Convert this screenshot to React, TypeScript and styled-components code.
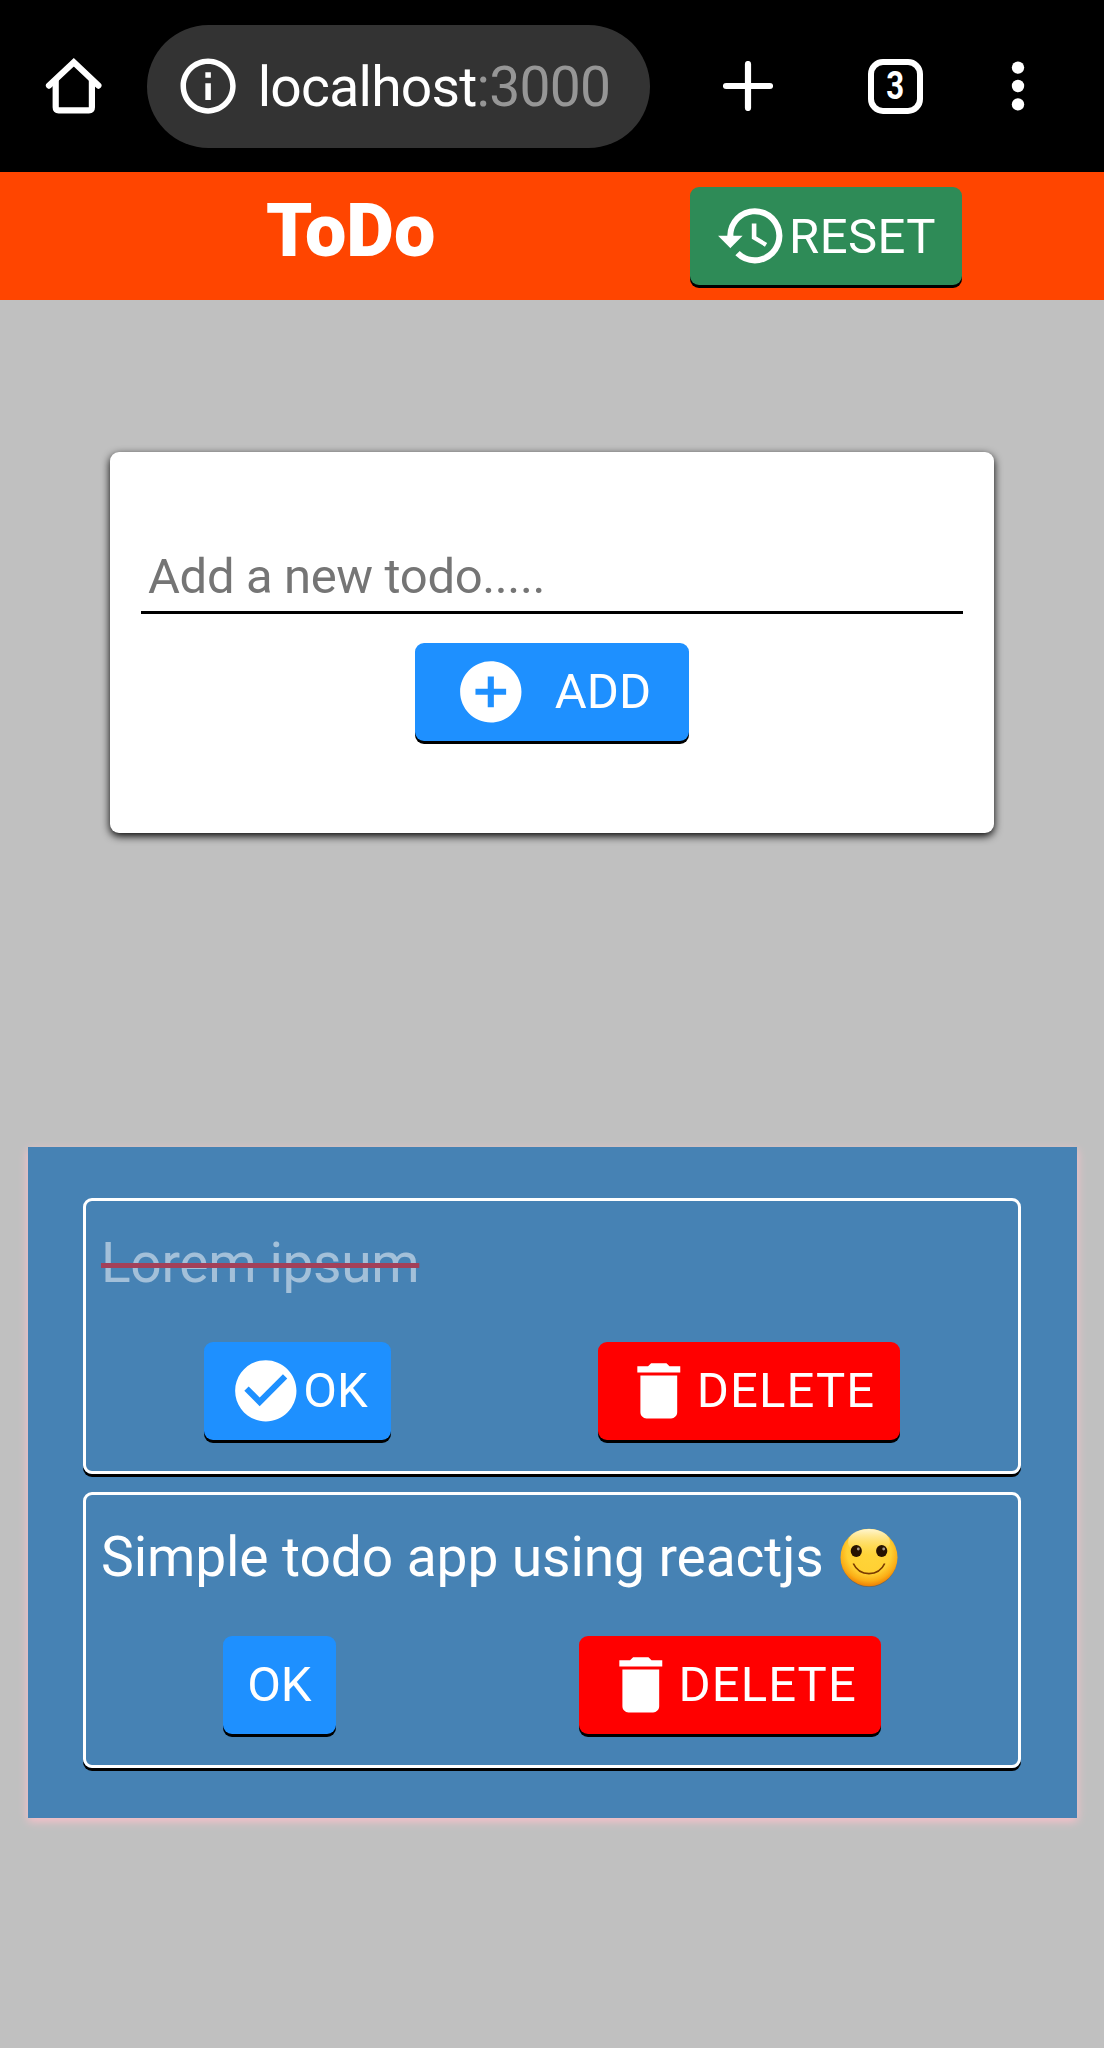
import React from "react";
import styled, { createGlobalStyle } from "styled-components";
import { MdAddCircle, MdCheckCircle, MdDelete, MdHistory, MdInfoOutline } from "react-icons/md";

const GlobalStyle = createGlobalStyle`
  * { box-sizing: border-box; }
  body {
    margin: 0;
    background: silver;
    font-family: Roboto, "Liberation Sans", sans-serif;
  }
`;

const Page = styled.div`
  min-height: 2048px;
  display: flex;
  flex-direction: column;
  background: silver;
  overflow: hidden;
`;

const BrowserBar = styled.header`
  flex: none;
  display: flex;
  align-items: center;
  height: 172px;
  padding: 0 76px 0 37px;
  background: #000;
  color: #fff;
`;

const AddressPill = styled.div`
  display: flex;
  align-items: center;
  width: 503px;
  height: 123px;
  margin-left: 36px;
  padding-left: 28px;
  border-radius: 62px;
  background: #333;
`;

const Address = styled.span`
  margin-left: 16.5px;
  padding-top: 2px;
  font-size: 55.2px;
  line-height: 64px;
  letter-spacing: -0.75px;
  white-space: nowrap;
`;

const Port = styled.span`
  color: #969696;
`;

const BarActions = styled.div`
  flex: 1;
  display: flex;
  align-items: center;
  justify-content: space-between;
  padding-left: 73px;
`;

const TabCount = styled.div`
  display: flex;
  align-items: center;
  justify-content: center;
  width: 55px;
  height: 55px;
  margin-left: 9px;
  border: 6px solid #fff;
  border-radius: 15px;
  font-size: 39px;
  font-weight: 700;
  line-height: 43px;
`;

const TabDigit = styled.span`
  padding-top: 1px;
  transform: scaleX(0.8);
`;

const AppHeader = styled.div`
  flex: none;
  display: flex;
  height: 128px;
  background: orangered;
  padding: 15px 142.5px 0 266px;
  justify-content: space-between;
  align-items: flex-start;
`;

const Title = styled.h1`
  margin: 0;
  padding-top: 0.5px;
  font-size: 73.6px;
  line-height: 86px;
  font-weight: 900;
  color: #fff;
`;

const Button = styled.button<{ $bg: string; $width: number; $spacing?: number; $gap?: number }>`
  display: flex;
  flex: none;
  align-items: center;
  gap: ${(p) => p.$gap ?? 1}px;
  width: ${(p) => p.$width}px;
  height: 98px;
  padding: 0 0 0 24.5px;
  border: 0;
  border-radius: 9px;
  box-shadow: 0 3px 0 #000;
  background: ${(p) => p.$bg};
  color: #fff;
  font-family: inherit;
  font-size: 49px;
  line-height: 57px;
  letter-spacing: ${(p) => p.$spacing ?? 0}px;
  white-space: nowrap;

  svg { flex: none; }
`;

const AddButton = styled(Button)`
  align-self: center;
  margin-top: 29px;
  padding-left: 39px;
`;

const FormCard = styled.form`
  flex: none;
  display: flex;
  flex-direction: column;
  width: 884px;
  height: 380.5px;
  margin: 152px auto 0;
  padding: 91px 31px 0;
  border-radius: 9px;
  background: #fff;
  box-shadow: 0 3px 9px #000;
`;

const TodoInput = styled.input`
  height: 70.5px;
  padding: 0 6px 1px 7px;
  border: 0;
  border-bottom: 3px solid #000;
  outline: 0;
  background: none;
  font-family: inherit;
  font-size: 49px;
  letter-spacing: -0.36px;

  &::placeholder { color: #757575; opacity: 1; }
`;

const ListPanel = styled.ul`
  flex: none;
  display: flex;
  flex-direction: column;
  gap: 18.4px;
  width: 1049px;
  margin: 314px auto 0;
  padding: 51px 55.5px 50px;
  list-style: none;
  background: steelblue;
  box-shadow: 0 3px 9px pink;
`;

const Item = styled.li`
  display: flex;
  flex-direction: column;
  justify-content: space-between;
  height: 276px;
  padding: 29px 15px 31px;
  border: 3px solid #fff;
  border-radius: 9px;
  box-shadow: 0 3px 0 #000;
`;

const ItemText = styled.span<{ $done?: boolean; $spacing?: number }>`
  display: inline-flex;
  align-items: center;
  align-self: flex-start;
  font-size: 55.2px;
  line-height: 66px;
  color: #fff;
  letter-spacing: ${(p) => p.$spacing ?? 0}px;
  white-space: nowrap;
  ${(p) => p.$done && "opacity: 0.5; text-decoration: line-through 4.5px red;"}
`;

const ItemActions = styled.div`
  display: flex;
  justify-content: space-around;
`;

const HomeIcon = () => (
  <svg width="74" height="74" viewBox="37 49 74 74" fill="none" stroke="#fff" strokeWidth="6.2">
    <path d="M49 85.6 73.8 62.2 98.4 85.6" strokeLinecap="round" />
    <path d="M55.7 80v27.3q0 3 3 3h30.2q3 0 3-3V80" />
  </svg>
);

const PlusIcon = () => (
  <svg width="50" height="50" viewBox="0 0 50 50" stroke="#fff" strokeWidth="6.2" strokeLinecap="round">
    <path d="M3 25h44M25 3v44" />
  </svg>
);

const MenuIcon = () => (
  <svg width="20" height="56" viewBox="0 0 20 56" fill="#fff">
    <circle cx="10" cy="9.6" r="6.2" />
    <circle cx="10" cy="28" r="6.2" />
    <circle cx="10" cy="46.4" r="6.2" />
  </svg>
);

const SmileIcon = styled.svg`
  flex: none;
  margin: 2px 0 0 16.5px;
`;

const Smile = () => (
  <SmileIcon width="58" height="60" viewBox="0 0 58 60" role="img" aria-label="smile">
    <defs>
      <radialGradient id="face" cx="0.5" cy="0.4" r="0.62">
        <stop offset="0" stopColor="#ffd53a" />
        <stop offset="0.62" stopColor="#ffd033" />
        <stop offset="0.82" stopColor="#fbae16" />
        <stop offset="1" stopColor="#ec7600" />
      </radialGradient>
      <linearGradient id="shine" x1="0" y1="0" x2="0" y2="1">
        <stop offset="0" stopColor="#fff6d0" />
        <stop offset="1" stopColor="#ffe272" stopOpacity="0" />
      </linearGradient>
    </defs>
    <ellipse cx="29" cy="30.5" rx="28" ry="28.6" fill="#7a5a30" opacity="0.6" />
    <ellipse cx="29" cy="29.5" rx="28.5" ry="28.7" fill="url(#face)" />
    <ellipse cx="29" cy="14" rx="21" ry="13" fill="url(#shine)" />
    <ellipse cx="16.3" cy="23" rx="5.6" ry="5.9" fill="#271200" />
    <ellipse cx="41.7" cy="23" rx="5.6" ry="5.9" fill="#271200" />
    <circle cx="18.3" cy="21" r="1.4" fill="#a89a88" />
    <circle cx="43.7" cy="21" r="1.4" fill="#a89a88" />
    <path d="M13.3 35.5Q18 45.6 29 45.6T44.7 35.5" fill="none" stroke="#7a3a00" strokeWidth="1.7" />
  </SmileIcon>
);

const ICON = 73.6;

export default function App() {
  return (
    <Page>
      <GlobalStyle />
      <BrowserBar>
        <HomeIcon />
        <AddressPill>
          <MdInfoOutline size={66.2} />
          <Address>
            localhost<Port>:3000</Port>
          </Address>
        </AddressPill>
        <BarActions>
          <PlusIcon />
          <TabCount>
            <TabDigit>3</TabDigit>
          </TabCount>
          <MenuIcon />
        </BarActions>
      </BrowserBar>

      <AppHeader>
        <Title>ToDo</Title>
        <Button $bg="seagreen" $width={271.5} $spacing={0.45}>
          <MdHistory size={ICON} />
          RESET
        </Button>
      </AppHeader>

      <FormCard onSubmit={(e) => e.preventDefault()}>
        <TodoInput placeholder="Add a new todo....." />
        <AddButton $bg="dodgerblue" $width={273.5} $gap={27}>
          <MdAddCircle size={ICON} />
          ADD
        </AddButton>
      </FormCard>

      <ListPanel>
        <Item>
          <ItemText $done $spacing={-0.38}>Lorem ipsum</ItemText>
          <ItemActions>
            <Button $bg="dodgerblue" $width={187}>
              <MdCheckCircle size={ICON} />
              OK
            </Button>
            <Button $bg="red" $width={302} $spacing={1.1}>
              <MdDelete size={ICON} />
              DELETE
            </Button>
          </ItemActions>
        </Item>
        <Item>
          <ItemText $spacing={-0.13}>
            Simple todo app using reactjs
            <Smile />
          </ItemText>
          <ItemActions>
            <Button $bg="dodgerblue" $width={113.5}>
              OK
            </Button>
            <Button $bg="red" $width={302} $spacing={1.1}>
              <MdDelete size={ICON} />
              DELETE
            </Button>
          </ItemActions>
        </Item>
      </ListPanel>
    </Page>
  );
}
